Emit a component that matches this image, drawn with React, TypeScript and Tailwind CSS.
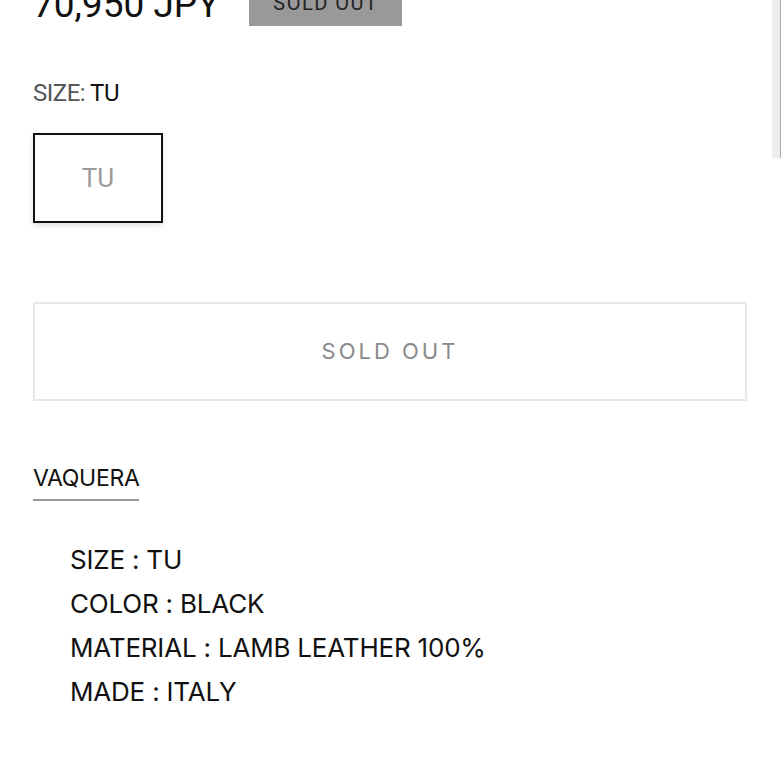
const specs = ["SIZE : TU", "COLOR : BLACK", "MATERIAL : LAMB LEATHER 100%", "MADE : ITALY"];

const ProductDetail = () => {
  return (
    <div className="relative min-h-[781px] w-full overflow-hidden bg-white">
      {/* scroll thumb */}
      <div className="absolute right-0 top-0 h-[158px] w-[9px] border-r border-[#a8a8a8] bg-[#eeeeee]" />

      <div className="pl-[33px] pr-[34px]">
        <div className="-mt-[19px] flex h-[45px] items-start gap-[30px]">
          <div className="font-['Roboto',sans-serif] text-[37px] leading-[48px] text-[#111]">70,950 JPY</div>
          <div className="flex h-[45px] w-[153px] items-center justify-center bg-[#999999] pb-[2px] font-['Roboto',sans-serif] text-[20px] tracking-[1.5px] text-[#222]">
            SOLD OUT
          </div>
        </div>

        <div className="mt-[52px] font-['Roboto',sans-serif] text-[24px] leading-[30px] tracking-[-0.5px]">
          <span className="text-[#555]">SIZE: </span>
          <span className="text-[#111]">TU</span>
        </div>

        <button className="mt-[25px] flex h-[90px] w-[130px] items-center justify-center border-2 border-[#111] bg-white font-['Roboto',sans-serif] text-[26px] text-[#9a9a9a] shadow-[0_3px_6px_rgba(0,0,0,0.12)]">
          TU
        </button>

        <div className="mt-[79px] flex h-[99px] w-full items-center justify-center border-2 border-[#e8e8e8] font-['Inter',sans-serif] text-[22px] tracking-[3px] text-[#8a8a8a]">
          SOLD OUT
        </div>

        <div className="mt-[63px] inline-block border-b-2 border-[#9a9a9a] pb-[7px] font-['Inter',sans-serif] text-[23px] leading-[28px] tracking-[-0.3px] text-[#111]">
          VAQUERA
        </div>

        <ul className="mt-[37px] pl-[37px] font-['Inter',sans-serif] text-[26px] leading-[44px] tracking-[-0.2px] text-[#111]">
          {specs.map((s) => (
            <li key={s}>{s}</li>
          ))}
        </ul>
      </div>
    </div>
  );
};

export default function App() {
  return <ProductDetail />;
}
